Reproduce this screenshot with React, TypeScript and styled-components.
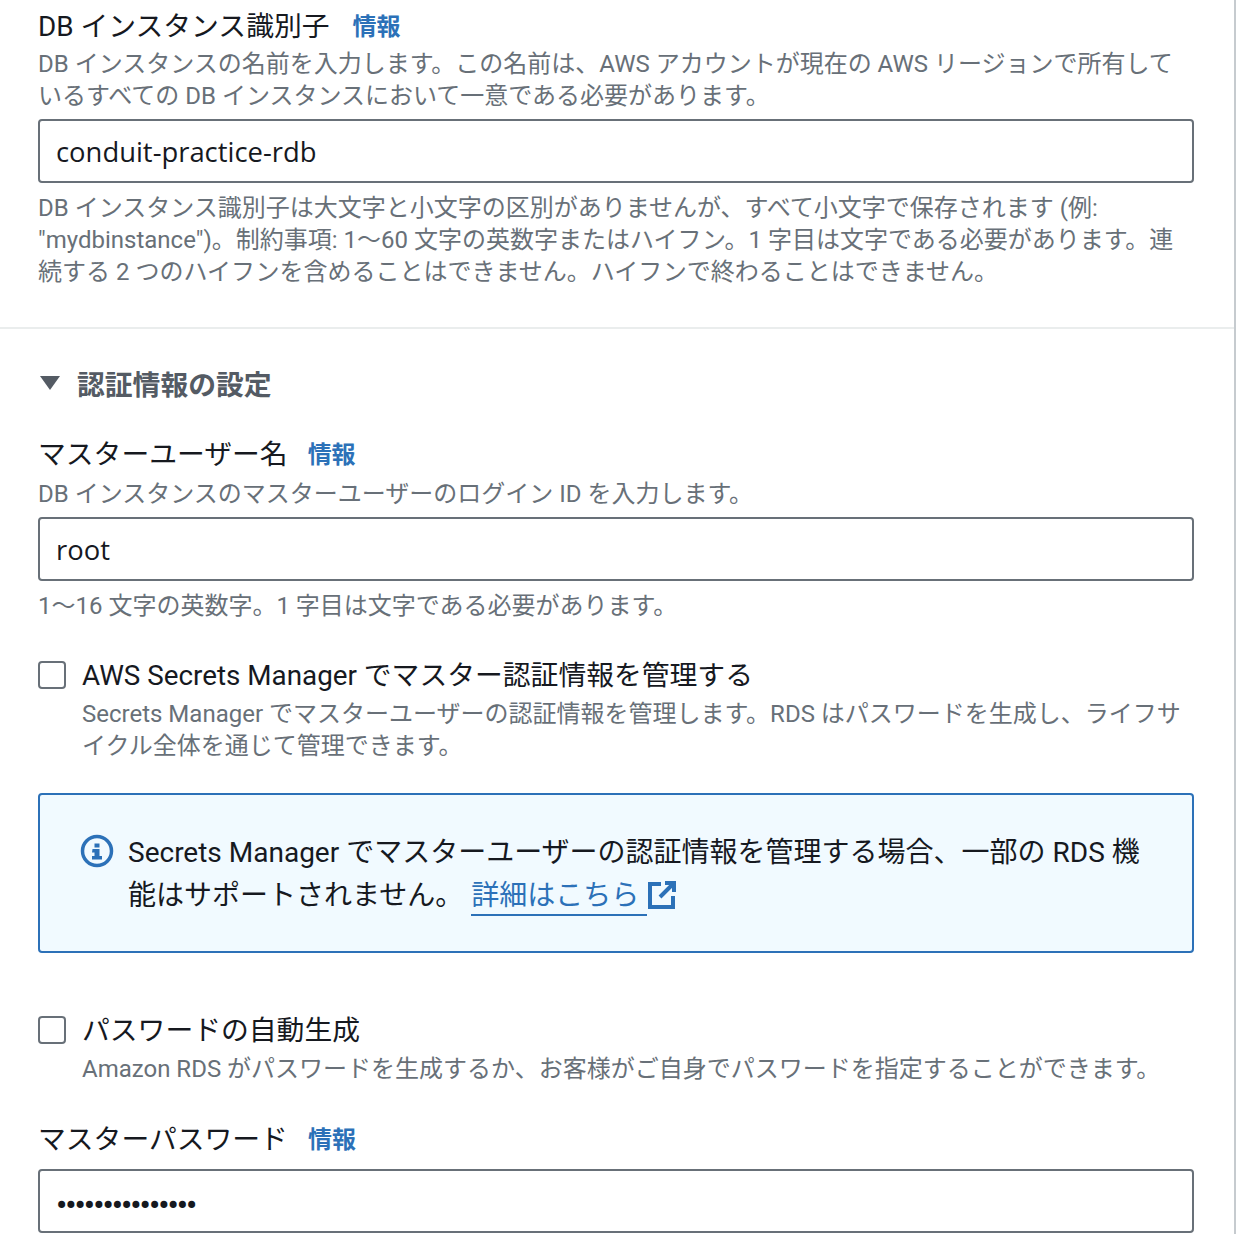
import React from 'react'
import styled, { createGlobalStyle } from 'styled-components'

const GlobalStyle = createGlobalStyle`
  html, body {
    margin: 0;
    padding: 0;
    background: #fff;
  }
  body {
    font-family: Roboto, "Noto Sans CJK JP", sans-serif;
    color: #16191f;
  }
`

const Page = styled.div`
  width: 1236px;
  height: 1234px;
  box-sizing: border-box;
  overflow: hidden;
  border-right: 2px solid #c6cbcf;
`

const Section = styled.section<{ $top: number; $bottom: number }>`
  padding: ${p => p.$top}px 40px ${p => p.$bottom}px 38px;
`

const Divider = styled.hr`
  margin: 0;
  border: 0;
  height: 2px;
  background: #eaeded;
`

const LabelRow = styled.div<{ $top?: number; $bottom?: number; $gap?: number }>`
  display: flex;
  align-items: center;
  gap: ${p => p.$gap ?? 20}px;
  height: 38px;
  margin: ${p => p.$top ?? 0}px 0 ${p => p.$bottom ?? 0}px;
  font-size: 27.8px;
  white-space: nowrap;
`

const InfoLink = styled.a`
  color: #2c71b8;
  font-size: 24px;
  font-weight: 700;
`

const Hint = styled.div`
  color: #687078;
  font-size: 24px;
  line-height: 32px;
  white-space: nowrap;
`

const Field = styled.div<{ $top?: number }>`
  box-sizing: border-box;
  height: 64px;
  margin: ${p => p.$top ?? 7}px 0 9px;
  padding: 0 16px;
  display: flex;
  align-items: center;
  border: 2px solid #687078;
  border-radius: 4px;
  font-family: "Open Sans", "Noto Sans CJK JP", sans-serif;
  font-size: 27.4px;
  font-weight: 500;
`

const Heading = styled.div`
  display: flex;
  align-items: center;
  gap: 16px;
  height: 40px;
  margin-bottom: 30px;
  color: #545b64;
  font-size: 27.8px;
  font-weight: 700;
`

const CheckRow = styled.div<{ $top?: number }>`
  display: grid;
  grid-template-columns: 28px 1fr;
  column-gap: 16px;
  margin-top: ${p => p.$top ?? 0}px;
`

const CheckBox = styled.span`
  box-sizing: border-box;
  width: 28px;
  height: 28px;
  margin-top: 3px;
  border: 2px solid #687078;
  border-radius: 4px;
`

const CheckLabel = styled.div`
  margin-bottom: 4px;
  font-size: 27.8px;
  line-height: 36px;
  white-space: nowrap;
`

const Notice = styled.div`
  box-sizing: border-box;
  height: 160px;
  margin: 31px 0 60px;
  padding: 36px 40px;
  display: grid;
  grid-template-columns: 34px 1fr;
  column-gap: 14px;
  background: #f1faff;
  border: 2px solid #2c71b8;
  border-radius: 4px;
`

const NoticeText = styled.div`
  font-size: 28px;
  line-height: 43px;
  white-space: nowrap;
`

const DocLink = styled.a`
  margin-left: 8px;
  padding: 0 8px 2px 0;
  color: #2c71b8;
  border-bottom: 2px solid #2c71b8;
`

const LinkIcon = styled.svg`
  display: inline-block;
  width: 30px;
  height: 30px;
  margin-left: 0;
  vertical-align: -5px;
`

const NoticeIcon = styled.svg`
  width: 34px;
  height: 34px;
  margin-top: 3px;
`

const Mask = styled.span`
  padding-top: 8px;
  font-family: Roboto, sans-serif;
  font-size: 32px;
  letter-spacing: -1.9px;
`

const CaretIcon = styled.svg`
  margin-left: 1px;
`

const Caret = () => (
  <CaretIcon width="22" height="16" viewBox="0 0 22 16">
    <path d="M1 1h20L11 15z" fill="#545b64" />
  </CaretIcon>
)

export default function App() {
  return (
    <Page>
      <GlobalStyle />
      <Section $top={5} $bottom={39}>
        <LabelRow $bottom={5} $gap={23}>
          DB インスタンス識別子
          <InfoLink>情報</InfoLink>
        </LabelRow>
        <Hint>
          DB インスタンスの名前を入力します。この名前は、AWS アカウントが現在の AWS リージョンで所有して
          <br />
          いるすべての DB インスタンスにおいて一意である必要があります。
        </Hint>
        <Field>conduit-practice-rdb</Field>
        <Hint>
          DB インスタンス識別子は大文字と小文字の区別がありませんが、すべて小文字で保存されます (例:
          <br />
          "mydbinstance")。制約事項: 1〜60 文字の英数字またはハイフン。1 字目は文字である必要があります。連
          <br />
          続する 2 つのハイフンを含めることはできません。ハイフンで終わることはできません。
        </Hint>
      </Section>
      <Divider />
      <Section $top={34} $bottom={0}>
        <Heading>
          <Caret />
          認証情報の設定
        </Heading>
        <LabelRow $bottom={7}>マスターユーザー名<InfoLink>情報</InfoLink></LabelRow>
        <Hint>DB インスタンスのマスターユーザーのログイン ID を入力します。</Hint>
        <Field>root</Field>
        <Hint>1〜16 文字の英数字。1 字目は文字である必要があります。</Hint>
        <CheckRow $top={36}>
          <CheckBox />
          <div>
            <CheckLabel>AWS Secrets Manager でマスター認証情報を管理する</CheckLabel>
            <Hint>
              Secrets Manager でマスターユーザーの認証情報を管理します。RDS はパスワードを生成し、ライフサ
              <br />
              イクル全体を通じて管理できます。
            </Hint>
          </div>
        </CheckRow>
        <Notice>
          <NoticeIcon viewBox="0 0 34 34">
            <circle cx="17" cy="17" r="14.5" fill="none" stroke="#2c71b8" strokeWidth="3.5" />
            <path d="M14.5 9.5h5v4h-5zM12.5 15h7v7h2.5v3.5h-10V22h2.5v-3.5h-2.5z" fill="#2c71b8" />
          </NoticeIcon>
          <NoticeText>
            Secrets Manager でマスターユーザーの認証情報を管理する場合、一部の RDS 機
            <br />
            能はサポートされません。
            <DocLink>詳細はこちら</DocLink>
            <LinkIcon viewBox="0 0 30 30">
              <path d="M14 4H3v23h23V16" fill="none" stroke="#2c71b8" strokeWidth="4" />
              <path d="M18 3h9v9M27 3L13 17" fill="none" stroke="#2c71b8" strokeWidth="4" />
            </LinkIcon>
          </NoticeText>
        </Notice>
        <CheckRow>
          <CheckBox />
          <div>
            <CheckLabel>パスワードの自動生成</CheckLabel>
            <Hint>Amazon RDS がパスワードを生成するか、お客様がご自身でパスワードを指定することができます。</Hint>
          </div>
        </CheckRow>
        <LabelRow $top={33}>マスターパスワード<InfoLink>情報</InfoLink></LabelRow>
        <Field $top={13}><Mask>•••••••••••••••</Mask></Field>
      </Section>
    </Page>
  )
}
